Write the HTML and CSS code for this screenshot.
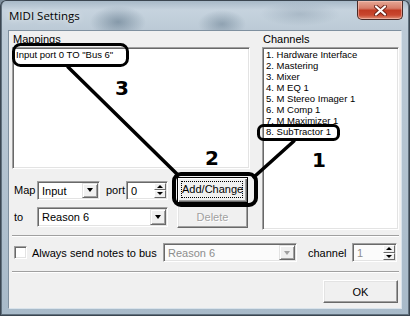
FILE: index.html
```html
<!DOCTYPE html>
<html lang="en">
<head>
    <meta charset="UTF-8">
    <title>MIDI Settings</title>
    <link rel="stylesheet" href="styles.css">
</head>
<body>
    <div class="window">
        <div class="titlebar">
            <span class="title">MIDI Settings</span>
            <div class="close">
                <svg width="13" height="11" viewBox="0 0 13 11">
                    <path d="M2 1.5 L11 9.5 M11 1.5 L2 9.5" stroke="#6b2218" stroke-width="4" stroke-linecap="round"/>
                    <path d="M2 1.5 L11 9.5 M11 1.5 L2 9.5" stroke="#fff" stroke-width="2.2" stroke-linecap="round"/>
                </svg>
            </div>
        </div>

        <div class="client">
            <div class="top">
                <div class="mappings">
                    <div class="caption">Mappings</div>
                    <div class="listbox map-list">
                        <div class="item">Input port 0 TO "Bus 6"</div>
                    </div>
                    <div class="row row-map">
                        <span class="lbl lbl-map">Map</span>
                        <div class="combo combo-input">
                            <span class="combo-text">Input</span>
                            <span class="combo-btn"><i class="arrow-down"></i></span>
                        </div>
                        <span class="lbl lbl-port">port</span>
                        <div class="spin spin-port">
                            <span class="spin-text">0</span>
                            <span class="spin-btns">
                                <span class="spin-up"><i class="arrow-up"></i></span>
                                <span class="spin-down"><i class="arrow-down small"></i></span>
                            </span>
                        </div>
                        <button class="btn btn-default btn-side"><span class="focus">Add/Change</span></button>
                    </div>
                    <div class="row row-to">
                        <span class="lbl lbl-map">to</span>
                        <div class="combo combo-target">
                            <span class="combo-text">Reason 6</span>
                            <span class="combo-btn"><i class="arrow-down"></i></span>
                        </div>
                        <button class="btn btn-disabled btn-side btn-delete">Delete</button>
                    </div>
                </div>

                <div class="channels">
                    <div class="caption">Channels</div>
                    <div class="listbox chan-list">
                        <div class="item">1. Hardware Interface</div>
                        <div class="item">2. Mastering</div>
                        <div class="item">3. Mixer</div>
                        <div class="item">4. M EQ 1</div>
                        <div class="item">5. M Stereo Imager 1</div>
                        <div class="item">6. M Comp 1</div>
                        <div class="item">7. M Maximizer 1</div>
                        <div class="item">8. SubTractor 1</div>
                    </div>
                </div>
            </div>

            <div class="sep sep-first"></div>

            <div class="row bus-row">
                <span class="checkbox"></span>
                <span class="lbl chk-label">Always send notes to bus</span>
                <div class="combo combo-bus disabled">
                    <span class="combo-text">Reason 6</span>
                    <span class="combo-btn"><i class="arrow-down"></i></span>
                </div>
                <span class="lbl lbl-channel">channel</span>
                <div class="spin spin-channel disabled">
                    <span class="spin-text">1</span>
                    <span class="spin-btns">
                        <span class="spin-up"><i class="arrow-up"></i></span>
                        <span class="spin-down"><i class="arrow-down small"></i></span>
                    </span>
                </div>
            </div>

            <div class="sep sep-second"></div>

            <div class="footer">
                <button class="btn btn-ok">OK</button>
            </div>
        </div>

        <!-- hand drawn annotations on top of the dialog -->
        <svg class="marks" width="410" height="316" viewBox="0 0 410 316">
            <g fill="none" stroke="#000" stroke-linecap="round">
                <rect x="13.5" y="44.5" width="114" height="21" rx="7" stroke-width="3"/>
                <line x1="68" y1="67" x2="178" y2="175" stroke-width="3.5"/>
                <rect x="174" y="174" width="82" height="31" rx="7" stroke-width="4"/>
                <rect x="258.5" y="125.5" width="80" height="14" rx="5" stroke-width="3"/>
                <line x1="294" y1="141" x2="254" y2="177" stroke-width="3.5"/>
            </g>
            <g class="digits">
                <text x="115" y="95">3</text>
                <text x="205" y="165">2</text>
                <text x="312" y="167">1</text>
            </g>
        </svg>
    </div>
</body>
</html>
```

FILE: styles.css
```css
* {
    box-sizing: border-box;
}

body {
    margin: 0;
    font-family: "Liberation Sans", Arial, sans-serif;
    font-size: 11px;
    color: #000;
    background: #7d8e9c;
    overflow: hidden;
}

.window {
    position: relative;
    width: 410px;
    height: 316px;
    display: flex;
    flex-direction: column;
    border-radius: 6px 6px 0 0;
    background:
        radial-gradient(ellipse 28px 16px at 118px 22px, rgba(86, 110, 130, 0.55), transparent),
        radial-gradient(ellipse 24px 14px at 222px 24px, rgba(86, 110, 130, 0.45), transparent),
        radial-gradient(ellipse 40px 12px at 300px 14px, rgba(120, 140, 158, 0.35), transparent),
        linear-gradient(180deg, #a4b6c5 0, #c6d3de 10px, #bccad6 30px, #a8bac9 100%);
    box-shadow: inset 0 0 0 1px #3b4651, inset 2px 0 0 #62727f, inset -2px 0 0 #62727f, inset 0 -2px 0 #62727f;
}

.titlebar {
    height: 30px;
    display: flex;
    align-items: center;
}

.title {
    padding-left: 9px;
    font-family: "Open Sans", "Noto Sans", sans-serif;
    font-size: 11.5px;
    text-shadow: 0 0 6px rgba(255, 255, 255, 0.9);
}

.close {
    align-self: flex-start;
    margin: 1px 7px 0 auto;
    width: 46px;
    height: 19px;
    display: flex;
    align-items: center;
    justify-content: center;
    border: 1px solid #4a2a26;
    border-top: none;
    border-radius: 0 0 5px 5px;
    background: linear-gradient(180deg, #e6a896 0, #d77d69 40%, #c13b23 52%, #c9472f 78%, #e08e74 100%);
    box-shadow: inset 0 0 0 1px rgba(255, 210, 200, 0.5);
}

.client {
    flex: 1;
    margin: 0 8px 7px 8px;
    padding: 1px 2px 0 3px;
    background: #f0f0f0;
    border: 1px solid;
    border-color: #7f909f #d9e3eb #d9e3eb #7f909f;
}

.top {
    display: flex;
    gap: 12px;
}

.mappings {
    width: 238px;
}

.channels {
    width: 137px;
}

.caption {
    height: 15px;
    line-height: 15px;
    padding-left: 1px;
}

.listbox {
    background: #fff;
    border: 1px solid;
    border-color: #a0a0a0 #fff #fff #a0a0a0;
    box-shadow: inset 1px 1px 0 #696969, inset -1px -1px 0 #e3e3e3;
    padding: 1px 3px;
}

.map-list {
    height: 122px;
}

.chan-list {
    height: 183px;
}

.item {
    font-size: 9.5px;
    line-height: 11px;
    white-space: nowrap;
}

.row {
    display: flex;
    align-items: center;
}

.row-map {
    margin-top: 8px;
    height: 26px;
}

.row-to {
    margin-top: 2px;
    height: 23px;
}

.lbl {
    white-space: nowrap;
}

.lbl-map {
    width: 25px;
    padding-left: 2px;
}

.lbl-port {
    width: 20px;
    margin-left: 6px;
}

.combo,
.spin {
    display: flex;
    height: 19px;
    background: #fff;
    border: 1px solid;
    border-color: #a0a0a0 #fff #fff #a0a0a0;
    box-shadow: inset 1px 1px 0 #696969, inset -1px -1px 0 #e3e3e3;
    padding: 1px;
}

.combo-text,
.spin-text {
    flex: 1;
    padding-left: 3px;
    line-height: 16px;
}

.combo-btn {
    width: 16px;
    display: flex;
    align-items: center;
    justify-content: center;
    background: #f0f0f0;
    border: 1px solid;
    border-color: #e3e3e3 #696969 #696969 #e3e3e3;
    box-shadow: inset 1px 1px 0 #fff, inset -1px -1px 0 #a0a0a0;
}

.arrow-down,
.arrow-up {
    display: block;
    width: 0;
    height: 0;
    border-left: 3.5px solid transparent;
    border-right: 3.5px solid transparent;
}

.arrow-down {
    border-top: 4px solid #000;
}

.arrow-up {
    border-bottom: 3px solid #000;
}

.arrow-down.small {
    border-top-width: 3px;
}

.combo-input {
    width: 63px;
}

.combo-target {
    width: 131px;
    height: 20px;
}

.spin-port {
    width: 42px;
}

.spin-btns {
    width: 12px;
    display: flex;
    flex-direction: column;
}

.spin-up,
.spin-down {
    flex: 1;
    display: flex;
    align-items: center;
    justify-content: center;
    background: #f0f0f0;
    border: 1px solid;
    border-color: #fff #696969 #696969 #fff;
}

.btn {
    font-family: "Liberation Sans", Arial, sans-serif;
    font-size: 11px;
    color: #000;
    padding: 0;
    background: #f0f0f0;
    border: 1px solid;
    border-color: #fff #696969 #696969 #fff;
    box-shadow: inset -1px -1px 0 #a0a0a0, inset 1px 1px 0 #e3e3e3;
}

.btn-side {
    width: 71px;
    margin-left: 9px;
}

.btn-default {
    height: 26px;
    border: 1px solid #000;
    box-shadow: inset 1px 1px 0 #fff, inset -1px -1px 0 #696969, inset -2px -2px 0 #a0a0a0;
    padding: 3px 4px 4px 3px;
}

.focus {
    display: block;
    height: 100%;
    line-height: 15px;
    border: 1px dotted #000;
}

.btn-delete {
    height: 23px;
}

.btn-disabled {
    color: #a0a0a0;
    text-shadow: 1px 1px 0 #fff;
}

.sep {
    height: 2px;
    border-top: 1px solid #a0a0a0;
    border-bottom: 1px solid #fff;
}

.sep-first {
    margin-top: 5px;
}

.bus-row {
    margin-top: 6px;
    height: 19px;
}

.checkbox {
    width: 13px;
    height: 13px;
    margin-left: 2px;
    margin-right: 5px;
    background: #fff;
    border: 1px solid;
    border-color: #a0a0a0 #fff #fff #a0a0a0;
    box-shadow: inset 1px 1px 0 #696969, inset -1px -1px 0 #e3e3e3;
}

.chk-label {
    width: 131px;
}

.combo-bus {
    width: 134px;
}

.lbl-channel {
    width: 44px;
    margin-left: 11px;
}

.spin-channel {
    width: 45px;
}

.disabled {
    background: #fbfbfb;
}

.disabled .combo-text,
.disabled .spin-text {
    color: #8d8d8d;
}

.combo.disabled .arrow-down {
    border-top-color: #a0a0a0;
}

.sep-second {
    margin-top: 9px;
}

.footer {
    margin-top: 7px;
    display: flex;
    justify-content: flex-end;
}

.btn-ok {
    width: 75px;
    height: 23px;
    margin-right: 1px;
}

.marks {
    position: absolute;
    top: 0;
    left: 0;
    pointer-events: none;
}

.digits text {
    font-family: "DejaVu Sans", Verdana, sans-serif;
    font-weight: bold;
    font-size: 20px;
    fill: #000;
}
```
